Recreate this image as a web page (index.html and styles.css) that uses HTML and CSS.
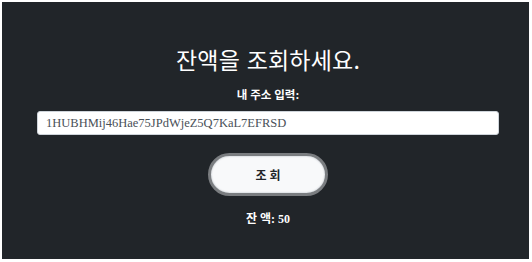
FILE: index.html
```html
<!DOCTYPE html>
<html lang="ko">
<head>
  <meta charset="UTF-8">
  <title>잔액 조회</title>
  <link rel="stylesheet" href="styles.css">
</head>
<body>
  <div class="page">
    <h1 class="title">잔액을 조회하세요.</h1>
    <label class="addr-label" for="addrInput">내 주소 입력:</label>
    <input id="addrInput" class="addr-input" type="text" value="1HUBHMij46Hae75JPdWjeZ5Q7KaL7EFRSD">
    <button class="check-btn">조 회</button>
    <div class="balance">잔 액: 50</div>
  </div>
</body>
</html>
```

FILE: styles.css
```css
body {
  margin: 0;
  padding: 2px 3px 3px 2px;
  background: #fff;
  font-family: "Liberation Serif", "Noto Sans CJK KR", serif;
}

.page {
  background: #212529;
  height: 257px;
  display: flex;
  flex-direction: column;
  align-items: center;
  padding: 0 30px 0 35px;
  color: #fff;
}

.title {
  margin: 41px 0 0 0;
  font-family: "Noto Sans CJK KR", "Noto Sans", sans-serif;
  font-size: 23px;
  font-weight: 400;
  line-height: 32px;
  letter-spacing: 0.2px;
}

.addr-label {
  margin-top: 12px;
  font-size: 11.5px;
  font-weight: 700;
  line-height: 16px;
}

.addr-input {
  box-sizing: border-box;
  width: 100%;
  height: 24px;
  margin-top: 8px;
  padding: 0 8px;
  border: 1px solid #ced4da;
  border-radius: 3px;
  background: #fff;
  color: #495057;
  font-family: "Liberation Serif", serif;
  font-size: 12.5px;
  outline: none;
}

.check-btn {
  box-sizing: border-box;
  width: 120px;
  height: 43px;
  margin-top: 18px;
  border: 3px solid #7a7d80;
  border-radius: 22px;
  background: #f8f9fa;
  color: #212529;
  font-family: inherit;
  font-size: 12px;
  font-weight: 700;
  box-shadow: inset 0 0 2px #adb5bd;
}

.balance {
  margin-top: 15px;
  font-size: 12px;
  font-weight: 700;
  line-height: 16px;
}
```
